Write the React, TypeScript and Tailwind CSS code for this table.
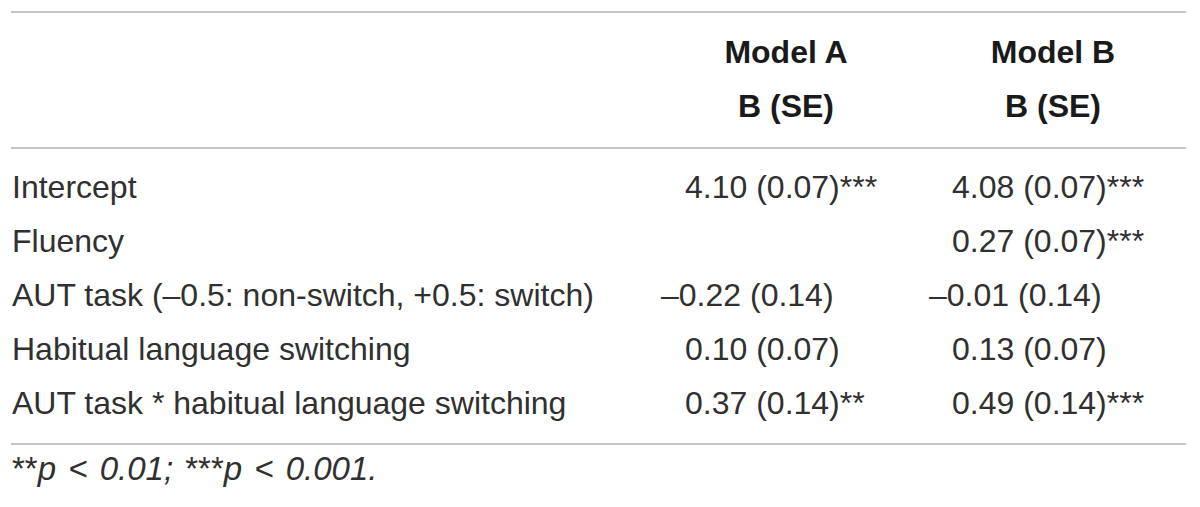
import React from "react";

type Row = { label: string; a?: string; aNeg?: boolean; b?: string; bNeg?: boolean };

const rows: Row[] = [
  { label: "Intercept", a: "4.10 (0.07)***", b: "4.08 (0.07)***" },
  { label: "Fluency", b: "0.27 (0.07)***" },
  { label: "AUT task (\u20130.5: non-switch, +0.5: switch)", a: "\u20130.22 (0.14)", aNeg: true, b: "\u20130.01 (0.14)", bNeg: true },
  { label: "Habitual language switching", a: "0.10 (0.07)", b: "0.13 (0.07)" },
  { label: "AUT task * habitual language switching", a: "0.37 (0.14)**", b: "0.49 (0.14)***" },
];

export default function App() {
  return (
    <div className="w-[1200px] h-[507px] bg-white pt-[11px] pl-[11px] font-['Liberation_Sans',Arial,sans-serif] text-[32px] text-[#303030] overflow-hidden">
      <div className="w-[1175px] border-t-2 border-[#c4c4c4]">
        <div className="pt-[12px] pb-[14px] border-b-2 border-[#c4c4c4] font-bold text-[#1a1a1a]">
          <div className="flex h-[54px] leading-[54px]">
            <div className="w-[641px]" />
            <div className="w-[268px] text-center">Model A</div>
            <div className="w-[266px] text-center">Model B</div>
          </div>
          <div className="flex h-[54px] leading-[54px]">
            <div className="w-[641px]" />
            <div className="w-[268px] text-center">B (SE)</div>
            <div className="w-[266px] text-center">B (SE)</div>
          </div>
        </div>
        <div className="pt-[11px] pb-[13px] border-b-2 border-[#c4c4c4]">
          {rows.map((r, i) => (
            <div key={i} className="flex h-[54px] leading-[54px] whitespace-nowrap">
              <div className="w-[641px] pl-[1px]">{r.label}</div>
              <div className={r.aNeg ? "w-[268px] pl-[9px]" : "w-[268px] pl-[33px]"}>{r.a ?? ""}</div>
              <div className={r.bNeg ? "w-[266px] pl-[9px]" : "w-[266px] pl-[32px]"}>{r.b ?? ""}</div>
            </div>
          ))}
        </div>
        <div className="mt-[6px] leading-[36px] pl-[1px] whitespace-nowrap text-[33px] [word-spacing:3px]">
          <span>**</span>
          <i>p &lt; 0.01; </i>
          <span>***</span>
          <i>p &lt; 0.001.</i>
        </div>
      </div>
    </div>
  );
}
